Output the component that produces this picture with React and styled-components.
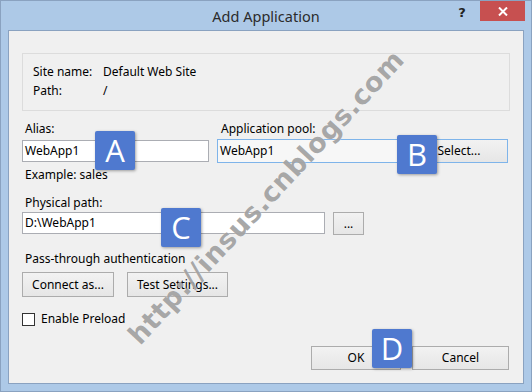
import React from "react";
import styled, { createGlobalStyle } from "styled-components";

const Global = createGlobalStyle`
  html, body { margin: 0; padding: 0; background: #fff; }
  body { font-family: "Noto Sans", "Open Sans", sans-serif; }
`;

const Window = styled.div`
  position: relative;
  width: 532px;
  height: 392px;
  box-sizing: border-box;
  background: #adc9e7;
  border: 1px solid #8aa2c0;
  display: flex;
  flex-direction: column;
  overflow: hidden;
`;

const TitleBar = styled.div`
  position: relative;
  height: 29px;
  display: flex;
  align-items: center;
  justify-content: center;
`;

const Title = styled.div`
  font-family: "Noto Sans", sans-serif;
  font-size: 14.5px;
  color: #2b2b2b;
  margin-top: 1px;
`;

const TitleButtons = styled.div`
  position: absolute;
  right: 6px;
  top: 0;
  display: flex;
  align-items: flex-start;
`;

const HelpButton = styled.div`
  width: 26px;
  height: 22px;
  font-family: "DejaVu Sans", sans-serif;
  font-weight: bold;
  font-size: 13px;
  color: #222;
  display: flex;
  align-items: center;
  justify-content: center;
  margin-right: 5px;
`;

const CloseButton = styled.div`
  width: 45px;
  height: 20px;
  background: #c75050;
  display: flex;
  align-items: center;
  justify-content: center;
`;

const Content = styled.div`
  margin: 0 7px 7px 7px;
  flex: 1;
  background: #f0f0f0;
  border: 1px solid #8aa2c0;
  padding: 22px 0 0 13px;
  display: flex;
  flex-direction: column;
  font-size: 12px;
  color: #000;
  line-height: 16px;
`;

const InfoBox = styled.div`
  width: 488px;
  height: 58px;
  box-sizing: border-box;
  border: 1px solid #dcdcdc;
  padding: 10px 0 0 10px;
  display: grid;
  grid-template-columns: 70px auto;
  row-gap: 3px;
  align-content: start;
`;

const Label = styled.div`
  padding-left: ${(p) => p.$indent ?? 3}px;
  margin-top: ${(p) => p.$mt ?? 0}px;
  white-space: nowrap;
`;

const FieldRow = styled.div`
  display: flex;
  gap: ${(p) => p.$gap ?? 8}px;
  margin-top: ${(p) => p.$mt ?? 0}px;
  align-items: ${(p) => p.$align ?? "flex-start"};
`;

const Column = styled.div`
  display: flex;
  flex-direction: column;
  gap: ${(p) => p.$gap ?? 3}px;
  margin-top: ${(p) => p.$mt ?? 0}px;
`;

const Input = styled.div`
  box-sizing: border-box;
  width: ${(p) => p.$w}px;
  height: ${(p) => p.$h ?? 22}px;
  margin-top: ${(p) => p.$mt ?? 0}px;
  background: ${(p) => (p.$focus ? "#f7f7f7" : "#fff")};
  border: 1px solid ${(p) => (p.$focus ? "#7eb4ea" : "#abadb3")};
  border-right: ${(p) => (p.$joined ? "none" : undefined)};
  display: flex;
  align-items: center;
  padding-left: 2px;
  white-space: nowrap;
`;

const Button = styled.div`
  box-sizing: border-box;
  width: ${(p) => p.$w}px;
  height: ${(p) => p.$h ?? 25}px;
  background: linear-gradient(#f2f2f2, #e6e6e6);
  border: 1px solid ${(p) => (p.$focus ? "#7eb4ea" : "#acacac")};
  display: flex;
  align-items: center;
  justify-content: center;
  white-space: nowrap;
`;

const CheckRow = styled.div`
  display: flex;
  align-items: center;
  gap: 6px;
  margin-top: 14px;
`;

const CheckBox = styled.div`
  width: 13px;
  height: 13px;
  box-sizing: border-box;
  background: #fff;
  border: 1px solid #333;
`;

const Footer = styled.div`
  display: flex;
  gap: 11px;
  margin-top: 19px;
  padding-left: 289px;
`;

const Badge = styled.div`
  position: absolute;
  left: ${(p) => p.$x}px;
  top: ${(p) => p.$y}px;
  width: 40px;
  height: 39px;
  background: #4f79cf;
  border-radius: 2px;
  box-shadow: 1px 1px 3px rgba(0, 0, 0, 0.35);
  color: #fff;
  font-family: "Open Sans", "Noto Sans", sans-serif;
  font-size: 31px;
  display: flex;
  align-items: center;
  justify-content: center;
  line-height: 1;
  z-index: 3;
`;

const Watermark = styled.div`
  position: absolute;
  left: 265px;
  top: 196px;
  transform: translate(-50%, -50%) rotate(-47deg);
  font-family: "DejaVu Sans", sans-serif;
  font-weight: bold;
  font-size: 27px;
  letter-spacing: 0.6px;
  color: rgba(135, 135, 135, 0.72);
  text-shadow: 0 0 1px rgba(255, 255, 255, 0.8);
  white-space: nowrap;
  pointer-events: none;
  z-index: 2;
`;

export default function App() {
  return (
    <>
      <Global />
      <Window>
        <TitleBar>
          <Title>Add Application</Title>
          <TitleButtons>
            <HelpButton>?</HelpButton>
            <CloseButton>
              <svg width="10" height="9" viewBox="0 0 10 9">
                <path d="M1 0.5 L9 8.5 M9 0.5 L1 8.5" stroke="#fff" strokeWidth="2" />
              </svg>
            </CloseButton>
          </TitleButtons>
        </TitleBar>
        <Content>
          <InfoBox>
            <Label $indent={0}>Site name:</Label>
            <Label $indent={0}>Default Web Site</Label>
            <Label $indent={0}>Path:</Label>
            <Label $indent={0}>/</Label>
          </InfoBox>
          <FieldRow $mt={10} $gap={8}>
            <Column $gap={2}>
              <Label>Alias:</Label>
              <Input $w={187} $mt={1}>WebApp1</Input>
              <Label $mt={3}>Example: sales</Label>
            </Column>
            <Column $gap={2}>
              <Label $indent={4}>Application pool:</Label>
              <FieldRow $gap={0}>
                <Input $w={193} $h={24} $focus $joined>WebApp1</Input>
                <Button $w={98} $h={24} $focus>Select...</Button>
              </FieldRow>
            </Column>
          </FieldRow>
          <Column $gap={1} $mt={12}>
            <Label>Physical path:</Label>
            <FieldRow $gap={8}>
              <Input $w={303}>D:\WebApp1</Input>
              <Button $w={31} $h={23}>...</Button>
            </FieldRow>
          </Column>
          <Label $mt={16}>Pass-through authentication</Label>
          <FieldRow $mt={5} $gap={13}>
            <Button $w={92}>Connect as...</Button>
            <Button $w={101}>Test Settings...</Button>
          </FieldRow>
          <CheckRow>
            <CheckBox />
            <span>Enable Preload</span>
          </CheckRow>
          <Footer>
            <Button $w={90} $h={24}>OK</Button>
            <Button $w={97} $h={24}>Cancel</Button>
          </Footer>
        </Content>
        <Watermark>http://insus.cnblogs.com</Watermark>
        <Badge $x={94} $y={130}>A</Badge>
        <Badge $x={396} $y={134}>B</Badge>
        <Badge $x={160} $y={207}>C</Badge>
        <Badge $x={371} $y={328}>D</Badge>
      </Window>
    </>
  );
}
